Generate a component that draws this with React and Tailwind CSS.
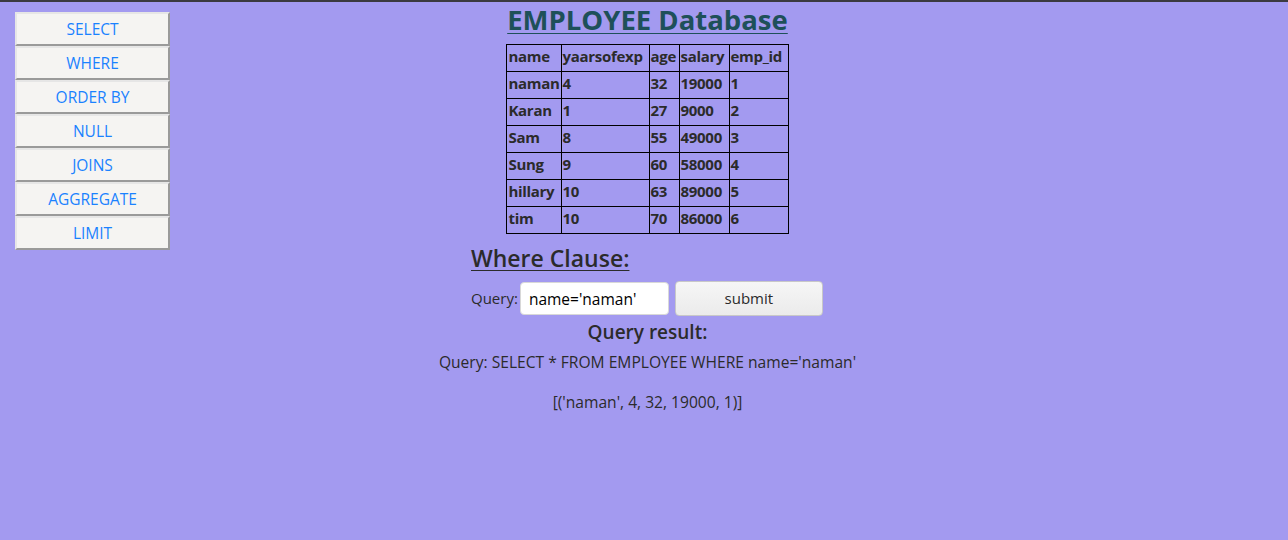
const menu = ['SELECT', 'WHERE', 'ORDER BY', 'NULL', 'JOINS', 'AGGREGATE', 'LIMIT'];

const rows = [
  ['naman', '4', '32', '19000', '1'],
  ['Karan', '1', '27', '9000', '2'],
  ['Sam', '8', '55', '49000', '3'],
  ['Sung', '9', '60', '58000', '4'],
  ['hillary', '10', '63', '89000', '5'],
  ['tim', '10', '70', '86000', '6'],
];

const heads = ['name', 'yaarsofexp', 'age', 'salary', 'emp_id'];
const widths = ['w-[54px]', 'w-[88px]', 'w-[30px]', 'w-[50px]', 'w-[59px]'];

export default function App() {
  return (
    <div className="min-h-screen bg-[#a39af0] border-t-2 border-[#3b3a40] text-[#2b2b2b] font-['Open_Sans',sans-serif] flex">
      {/* side menu */}
      <div className="w-[170px] pl-[15px] pt-[10px] flex flex-col">
        {menu.map((m) => (
          <button
            key={m}
            className="w-[155px] h-[34px] pt-[2px] bg-[#f5f4f2] border-2 border-t-[#e6e6e6] border-l-[#e6e6e6] border-b-[#9a9a9a] border-r-[#9a9a9a] text-[#1a82ff] text-[15.5px] flex items-center justify-center"
          >
            {m}
          </button>
        ))}
      </div>

      <div className="flex-1 pl-[7px] flex flex-col items-center">
        <h1 className="text-[27.5px] font-bold leading-[30px] pt-[3px] text-[#1e5059] underline underline-offset-[3px] decoration-1">
          EMPLOYEE Database
        </h1>

        <table className="mt-[9px] border-collapse text-[15px] font-bold">
          <thead>
            <tr>
              {heads.map((h, i) => (
                <th key={h} className={`${widths[i]} h-[27px] border border-black text-left px-[1px] pb-[3px] font-bold tracking-[-0.3px]`}>
                  {h}
                </th>
              ))}
            </tr>
          </thead>
          <tbody>
            {rows.map((r) => (
              <tr key={r[0]}>
                {r.map((c, i) => (
                  <td key={i} className="h-[27px] border border-black px-[1px] pb-[3px] tracking-[-0.3px]">
                    {c}
                  </td>
                ))}
              </tr>
            ))}
          </tbody>
        </table>

        <div className="mt-[9px] w-[353px]">
          <h3 className="text-[23px] font-semibold leading-[30px] underline underline-offset-[3px] decoration-1">Where Clause:</h3>
          <div className="mt-[8px] flex items-center text-[15px]">
            <span className="mr-[2px]">Query:</span>
            <input
              defaultValue="name='naman'"
              className="w-[149px] h-[33px] bg-white rounded-[4px] border border-[#d8d8d8] px-[8px] text-[15.5px] text-black outline-none"
            />
            <button className="ml-[6px] w-[148px] h-[35px] rounded-[4px] border border-[#c8c8c8] bg-gradient-to-b from-[#f6f6f6] to-[#ebebeb] text-[15px] text-[#2b2b2b]">
              submit
            </button>
          </div>
        </div>

        <h3 className="mt-[3px] text-[19px] font-semibold leading-[26px]">Query result:</h3>
        <p className="mt-[7px] text-[15.6px] leading-[20px]">Query: SELECT * FROM EMPLOYEE WHERE name='naman'</p>
        <p className="mt-[20px] text-[15.6px] leading-[20px]">[('naman', 4, 32, 19000, 1)]</p>
      </div>

      <div className="w-[170px]" />
    </div>
  );
}
